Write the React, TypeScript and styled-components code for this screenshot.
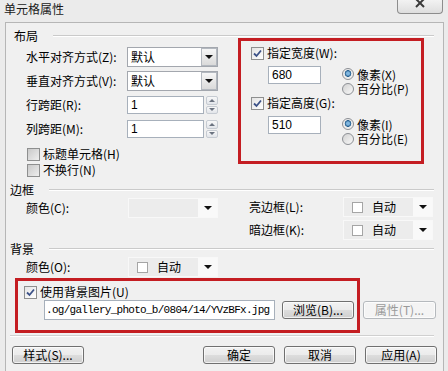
import React from 'react';
import styled, { createGlobalStyle } from 'styled-components';

const GlobalStyle = createGlobalStyle`
  html, body { margin: 0; padding: 0; background: #ebebeb; }
  body {
    font-family: "Noto Sans CJK SC", "Liberation Sans", sans-serif;
    font-size: 12px;
    line-height: 14px;
    color: #000;
  }
`;

const Dialog = styled.div`
  width: 448px;
  height: 371px;
  overflow: hidden;
  background: #ebebeb;
  display: flex;
  flex-direction: column;
`;

const TitleBar = styled.div`
  height: 22px;
  flex-shrink: 0;
  display: flex;
  justify-content: space-between;
  align-items: flex-start;
  padding-left: 4px;
`;

const TitleText = styled.span`
  margin-top: 2px;
  color: #1a1a1a;
`;

const CloseButton = styled.div`
  width: 46px;
  height: 14px;
  margin-right: 5px;
  box-sizing: border-box;
  border: 1px solid #8d8d8d;
  border-top: none;
  border-radius: 0 0 4px 4px;
  background: linear-gradient(#f2f2f2, #dedede);
  display: flex;
  justify-content: center;
  align-items: flex-start;
`;

const Panel = styled.div`
  flex: 1;
  margin: 0 4px 0 5px;
  border: 1px solid #b6b6b6;
  border-bottom: none;
  background: #f0f0f0;
  display: flex;
  flex-direction: column;
`;

const GroupHeader = styled.div<{ $indent: number; $top: number }>`
  display: flex;
  align-items: center;
  height: 14px;
  margin-top: ${p => p.$top}px;
  padding-left: ${p => p.$indent}px;
  padding-right: 9px;

  &::after {
    content: '';
    flex: 1;
    margin-left: 15px;
    border-top: 1px solid #cacaca;
    border-bottom: 1px solid #ffffff;
  }
`;

const LayoutBody = styled.div`
  display: flex;
  margin-top: 4px;
`;

const LeftColumn = styled.div`
  width: 212px;
  padding-left: 20px;
  display: flex;
  flex-direction: column;
`;

const FieldRow = styled.div<{ $top?: number; $h?: number }>`
  display: grid;
  grid-template-columns: 101px auto;
  align-items: center;
  height: ${p => p.$h ?? 20}px;
  margin-top: ${p => p.$top ?? 0}px;
`;

const Select = styled.div`
  width: 91px;
  height: 20px;
  box-sizing: border-box;
  border: 1px solid #a3a7ae;
  background: #fff;
  display: flex;
  align-items: center;
  padding: 0 0 0 3px;
`;

const Arrow = styled.span`
  width: 0;
  height: 0;
  border-left: 4px solid transparent;
  border-right: 4px solid transparent;
  border-top: 4px solid #111;
`;

const SelectButton = styled.span`
  margin-left: auto;
  width: 16px;
  height: 18px;
  box-sizing: border-box;
  border: 1px solid #b3b8bf;
  background: linear-gradient(#f6f6f6, #dadada);
  display: flex;
  align-items: center;
  justify-content: center;
`;

const Spinner = styled.div`
  display: flex;
  gap: 2px;
  height: 18px;
`;

const TextBox = styled.div<{ $w: number; $h?: number; $mono?: boolean }>`
  width: ${p => p.$w}px;
  height: ${p => p.$h ?? 18}px;
  box-sizing: border-box;
  border: 1px solid #a7b0bb;
  background: #fff;
  padding-left: ${p => (p.$mono ? 1 : 3)}px;
  display: flex;
  align-items: center;
  overflow: hidden;
  white-space: nowrap;
  font-family: ${p => (p.$mono ? '"Liberation Mono", monospace' : '"Liberation Sans", sans-serif')};
  font-size: ${p => (p.$mono ? '11px' : '12px')};
  letter-spacing: ${p => (p.$mono ? '-0.72px' : '0')};
`;

const SpinButtons = styled.div`
  width: 12px;
  display: flex;
  flex-direction: column;
  gap: 1px;
`;

const SpinHalf = styled.span<{ $up?: boolean }>`
  flex: 1;
  border: 1px solid #c6cbd2;
  border-radius: 2px;
  background: linear-gradient(#f8f8f8, #e2e5ea);
  display: flex;
  align-items: center;
  justify-content: center;

  &::after {
    content: '';
    border-left: 3px solid transparent;
    border-right: 3px solid transparent;
    ${p => (p.$up ? 'border-bottom: 3px solid #6b7380;' : 'border-top: 3px solid #6b7380;')}
  }
`;

const CheckRow = styled.label<{ $h?: number; $top?: number; $left?: number }>`
  display: flex;
  align-items: center;
  gap: 3px;
  height: ${p => p.$h ?? 16}px;
  margin-top: ${p => p.$top ?? 0}px;
  padding-left: ${p => p.$left ?? 0}px;
  white-space: nowrap;
`;

const Box = styled.span<{ $checked?: boolean }>`
  width: 13px;
  height: 13px;
  box-sizing: border-box;
  border: 1px solid #8e8f8f;
  background: ${p =>
    p.$checked
      ? 'linear-gradient(135deg, #e4e4e4, #ffffff)'
      : 'linear-gradient(135deg, #c9c9c9, #eeeeee)'};
  display: inline-flex;
  align-items: center;
  justify-content: center;
  flex-shrink: 0;
`;

const Radio = styled.span<{ $checked?: boolean }>`
  width: 12px;
  height: 12px;
  box-sizing: border-box;
  border-radius: 50%;
  border: 1px solid #8c8f94;
  background: ${p => (p.$checked ? 'radial-gradient(circle at 50% 45%, #7fb5de 0 1.5px, #1d5a8c 3px, #e8e8e8 3.6px, #f8f8f8 100%)' : 'linear-gradient(135deg, #d2d2d2, #f8f8f8)')};
  flex-shrink: 0;
`;

const RedFrame = styled.div<{ $w: number; $h: number; $top: number; $left?: number }>`
  width: ${p => p.$w}px;
  height: ${p => p.$h}px;
  margin-top: ${p => p.$top}px;
  margin-left: ${p => p.$left ?? 0}px;
  box-sizing: border-box;
  border: 3px solid #c41d22;
  display: flex;
  flex-direction: column;
  flex-shrink: 0;
`;

const SizeBlock = styled.div<{ $top: number }>`
  display: flex;
  flex-direction: column;
  margin-top: ${p => p.$top}px;
`;

const SizeOptions = styled.div`
  display: flex;
  height: 30px;
  margin-top: 6px;
  padding-left: 27px;
`;

const RadioGroup = styled.div`
  display: flex;
  flex-direction: column;
  margin-left: 21px;
  margin-top: 1px;
`;

const RadioRow = styled.label`
  display: flex;
  align-items: center;
  gap: 3px;
  height: 15px;
  line-height: 13px;
  white-space: nowrap;
`;

const BorderBody = styled.div`
  display: flex;
  padding-left: 20px;
`;

const BorderField = styled.div<{ $label: number; $top?: number }>`
  display: grid;
  grid-template-columns: ${p => p.$label}px 90px;
  align-items: center;
  height: 20px;
  margin-top: ${p => p.$top ?? 0}px;
`;

const SideFields = styled.div`
  display: flex;
  flex-direction: column;
  gap: 3px;
  margin-left: 31px;
`;

const ColorPicker = styled.div`
  width: 90px;
  height: 20px;
  box-sizing: border-box;
  border: 1px solid #f8f8f8;
  background: #f9f9f9;
  display: flex;
`;

const Swatch = styled.div`
  flex: 1;
  background: #ececec;
  display: flex;
  align-items: center;
  gap: 9px;
  padding-left: 8px;
`;

const SwatchSquare = styled.span`
  width: 11px;
  height: 11px;
  box-sizing: border-box;
  border: 1px solid #a5a5a5;
  background: #fff;
`;

const PickerArrow = styled.div`
  width: 19px;
  display: flex;
  align-items: center;
  justify-content: center;
`;

const BackgroundBottom = styled.div`
  display: flex;
  padding-left: 9px;
`;

const FileRow = styled.div`
  display: flex;
  align-items: center;
  gap: 7px;
  margin-top: 1px;
  padding-left: 26px;
`;

const Button = styled.div<{ $w?: number; $disabled?: boolean }>`
  width: ${p => p.$w ?? 72}px;
  height: 18px;
  box-sizing: border-box;
  border: 1px solid ${p => (p.$disabled ? '#b5b9bd' : '#707070')};
  border-radius: 3px;
  background: ${p =>
    p.$disabled
      ? '#f4f4f4'
      : 'linear-gradient(#f2f2f2 0%, #ebebeb 50%, #dddddd 51%, #cfcfcf 100%)'};
  color: ${p => (p.$disabled ? '#9a9a9a' : '#000')};
  display: flex;
  align-items: center;
  justify-content: center;
  flex-shrink: 0;
  white-space: nowrap;
  box-shadow: inset 0 0 0 1px rgba(255, 255, 255, 0.7);
`;

const Separator = styled.div`
  margin: 2px 9px 0 4px;
  border-top: 1px solid #d0d0d0;
  border-bottom: 1px solid #fff;
`;

const ButtonBar = styled.div`
  display: flex;
  gap: 9px;
  margin-top: 9px;
  padding: 0 6px;
`;

const Spacer = styled.div`
  flex: 1;
`;

const Check = () => (
  <svg width="9" height="9" viewBox="0 0 9 9">
    <path d="M1 4.5 L3.5 7 L8 1.5" fill="none" stroke="#3c5288" strokeWidth="1.8" />
  </svg>
);

const CheckBox = ({ checked }: { checked?: boolean }) => <Box $checked={checked}>{checked && <Check />}</Box>;

const SizeGroup = ({ label, value, px, pct }: { label: string; value: string; px: string; pct: string }) => (
  <>
    <CheckRow $h={14} $left={10}>
      <CheckBox checked />
      {label}
    </CheckRow>
    <SizeOptions>
      <TextBox $w={53}>{value}</TextBox>
      <RadioGroup>
        <RadioRow>
          <Radio $checked />
          {px}
        </RadioRow>
        <RadioRow>
          <Radio />
          {pct}
        </RadioRow>
      </RadioGroup>
    </SizeOptions>
  </>
);

const AutoColor = () => (
  <ColorPicker>
    <Swatch>
      <SwatchSquare />
      自动
    </Swatch>
    <PickerArrow>
      <Arrow />
    </PickerArrow>
  </ColorPicker>
);

const App: React.FC = () => {
  return (
    <Dialog>
      <GlobalStyle />
      <TitleBar>
        <TitleText>单元格属性</TitleText>
        <CloseButton>
          <svg width="10" height="8" viewBox="0 0 10 8">
            <path d="M1 -1 L9 7 M9 -1 L1 7" stroke="#3a3a3a" strokeWidth="2" />
          </svg>
        </CloseButton>
      </TitleBar>

      <Panel>
        <GroupHeader $indent={8} $top={6}>布局</GroupHeader>
        <LayoutBody>
          <LeftColumn>
            <FieldRow>
              <span>水平对齐方式(Z):</span>
              <Select>
                默认
                <SelectButton>
                  <Arrow />
                </SelectButton>
              </Select>
            </FieldRow>
            <FieldRow $top={4}>
              <span>垂直对齐方式(V):</span>
              <Select>
                默认
                <SelectButton>
                  <Arrow />
                </SelectButton>
              </Select>
            </FieldRow>
            <FieldRow $top={5} $h={18}>
              <span>行跨距(R):</span>
              <Spinner>
                <TextBox $w={77}>1</TextBox>
                <SpinButtons>
                  <SpinHalf $up />
                  <SpinHalf />
                </SpinButtons>
              </Spinner>
            </FieldRow>
            <FieldRow $top={6} $h={18}>
              <span>列跨距(M):</span>
              <Spinner>
                <TextBox $w={77}>1</TextBox>
                <SpinButtons>
                  <SpinHalf $up />
                  <SpinHalf />
                </SpinButtons>
              </Spinner>
            </FieldRow>
            <CheckRow $top={8} $left={1}>
              <CheckBox />
              标题单元格(H)
            </CheckRow>
            <CheckRow $left={1}>
              <CheckBox />
              不换行(N)
            </CheckRow>
          </LeftColumn>

          <RedFrame $w={186} $h={126} $top={-9}>
            <SizeBlock $top={5}>
              <SizeGroup label="指定宽度(W):" value="680" px="像素(X)" pct="百分比(P)" />
            </SizeBlock>
            <SizeBlock $top={0}>
              <SizeGroup label="指定高度(G):" value="510" px="像素(I)" pct="百分比(E)" />
            </SizeBlock>
          </RedFrame>
        </LayoutBody>

        <GroupHeader $indent={4} $top={5}>边框</GroupHeader>
        <BorderBody>
          <BorderField $label={102} $top={1}>
            <span>颜色(C):</span>
            <ColorPicker>
              <Swatch />
              <PickerArrow>
                <Arrow />
              </PickerArrow>
            </ColorPicker>
          </BorderField>
          <SideFields>
            <BorderField $label={94}>
              <span>亮边框(L):</span>
              <AutoColor />
            </BorderField>
            <BorderField $label={94}>
              <span>暗边框(K):</span>
              <AutoColor />
            </BorderField>
          </SideFields>
        </BorderBody>

        <GroupHeader $indent={4} $top={2}>背景</GroupHeader>
        <BorderBody>
          <BorderField $label={102} $top={1}>
            <span>颜色(O):</span>
            <AutoColor />
          </BorderField>
        </BorderBody>

        <BackgroundBottom>
          <RedFrame $w={345} $h={55} $top={1}>
            <CheckRow $h={14} $top={4} $left={6}>
              <CheckBox checked />
              使用背景图片(U)
            </CheckRow>
            <FileRow>
              <TextBox $w={231} $h={20} $mono>
                .og/gallery_photo_b/0804/14/YVzBFx.jpg
              </TextBox>
              <Button>浏览(B)...</Button>
            </FileRow>
          </RedFrame>
          <Button $disabled $w={73} style={{ marginTop: 24, marginLeft: 3 }}>
            属性(T)...
          </Button>
        </BackgroundBottom>

        <Separator />

        <ButtonBar>
          <Button>样式(S)...</Button>
          <Spacer />
          <Button>确定</Button>
          <Button>取消</Button>
          <Button>应用(A)</Button>
        </ButtonBar>
      </Panel>
    </Dialog>
  );
};

export default App;
